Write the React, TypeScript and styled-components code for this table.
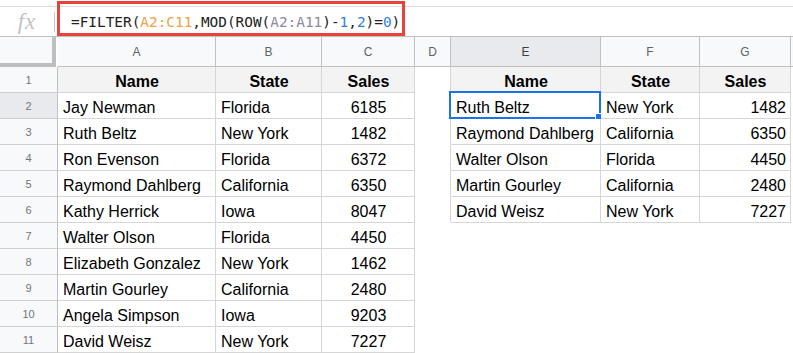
import styled, { createGlobalStyle } from 'styled-components';

const GlobalStyle = createGlobalStyle`
  html, body {
    margin: 0;
    padding: 0;
    background: #ffffff;
  }
  body {
    font-family: 'Liberation Sans', Arial, sans-serif;
  }
`;

const Page = styled.div`
  position: relative;
  width: 793px;
  height: 353px;
  overflow: hidden;
  padding-top: 6px;
  box-sizing: border-box;
  background: #fff;
`;

const FormulaBar = styled.div`
  position: relative;
  display: flex;
  align-items: center;
  height: 31px;
  box-sizing: border-box;
  border-top: 1px solid #e0e0e0;
  border-bottom: 1px solid #c0c0c0;
`;

const FxBox = styled.div`
  width: 54px;
  height: 20px;
  display: flex;
  align-items: center;
  justify-content: center;
  border-right: 1px solid #c7c7c7;
  font-family: 'Liberation Serif', 'Times New Roman', serif;
  font-style: italic;
  font-size: 23px;
  color: #c2c2c2;
  letter-spacing: 1px;
`;

const Formula = styled.div`
  padding-left: 16px;
  font-family: 'DejaVu Sans Mono', 'Liberation Mono', monospace;
  font-size: 14.4px;
  color: #222;
  white-space: nowrap;
`;

const Token = styled.span<{ $kind: 'range1' | 'range2' | 'num' }>`
  color: ${(p) =>
    p.$kind === 'range1' ? '#f1a13f' : p.$kind === 'range2' ? '#8d8a9f' : '#2e80dd'};
`;

const Highlight = styled.div`
  position: absolute;
  left: 57px;
  top: -6px;
  width: 348px;
  height: 35px;
  box-sizing: border-box;
  border: 3px solid #e8423b;
  pointer-events: none;
`;

const Sheet = styled.div`
  display: grid;
  grid-template-columns: 58px 158px 106px 93px 36px 150px 99px 91px 1fr;
`;

const Corner = styled.div`
  height: 30px;
  box-sizing: border-box;
  background: #f8f9fa;
  border-right: 4px solid #bfbfbf;
  border-bottom: 4px solid #bfbfbf;
  margin-right: 2px;
`;

const ColHead = styled.div<{ $active?: boolean }>`
  height: 30px;
  box-sizing: border-box;
  display: flex;
  align-items: center;
  justify-content: center;
  background: ${(p) => (p.$active ? '#e8eaed' : '#f8f9fa')};
  border-right: 1px solid #c0c0c0;
  border-bottom: 1px solid #c0c0c0;
  font-size: 12px;
  color: ${(p) => (p.$active ? '#3c4043' : '#5f6368')};
`;

const RowHead = styled.div<{ $active?: boolean }>`
  height: 26px;
  box-sizing: border-box;
  display: flex;
  align-items: center;
  justify-content: center;
  background: ${(p) => (p.$active ? '#e8eaed' : '#f8f9fa')};
  border-right: 1px solid #c0c0c0;
  border-bottom: 1px solid #d0d0d0;
  font-size: 11px;
  color: #70757a;
`;

type Align = 'left' | 'center' | 'right';

const Cell = styled.div<{
  $right?: boolean;
  $bottom?: boolean;
  $align?: Align;
  $header?: boolean;
  $selected?: boolean;
}>`
  position: relative;
  height: 26px;
  box-sizing: border-box;
  padding: 0 4px 1px 5px;
  display: flex;
  align-items: flex-end;
  justify-content: ${(p) =>
    p.$align === 'center' ? 'center' : p.$align === 'right' ? 'flex-end' : 'flex-start'};
  border-right: 1px solid ${(p) => (p.$right ? '#d6d6d6' : 'transparent')};
  border-bottom: 1px solid ${(p) => (p.$bottom ? '#d6d6d6' : 'transparent')};
  background: ${(p) => (p.$header ? '#f3f3f3' : '#ffffff')};
  font-size: 16px;
  line-height: 18px;
  font-weight: ${(p) => (p.$header ? 700 : 400)};
  color: #000;
  white-space: nowrap;
  overflow: ${(p) => (p.$selected ? 'visible' : 'hidden')};

  ${(p) =>
    p.$selected &&
    `
    &::before {
      content: '';
      position: absolute;
      left: -2px;
      top: -2px;
      right: -1px;
      bottom: -1px;
      border: 2px solid #1a73e8;
    }
    &::after {
      content: '';
      position: absolute;
      right: -5px;
      bottom: -5px;
      width: 8px;
      height: 8px;
      background: #1a73e8;
      border: 1px solid #fff;
    }
  `}
`;

const columns = ['A', 'B', 'C', 'D', 'E', 'F', 'G', ''];

const source: [string, string, string][] = [
  ['Name', 'State', 'Sales'],
  ['Jay Newman', 'Florida', '6185'],
  ['Ruth Beltz', 'New York', '1482'],
  ['Ron Evenson', 'Florida', '6372'],
  ['Raymond Dahlberg', 'California', '6350'],
  ['Kathy Herrick', 'Iowa', '8047'],
  ['Walter Olson', 'Florida', '4450'],
  ['Elizabeth Gonzalez', 'New York', '1462'],
  ['Martin Gourley', 'California', '2480'],
  ['Angela Simpson', 'Iowa', '9203'],
  ['David Weisz', 'New York', '7227'],
];

const filtered: [string, string, string][] = [
  ['Name', 'State', 'Sales'],
  ['Ruth Beltz', 'New York', '1482'],
  ['Raymond Dahlberg', 'California', '6350'],
  ['Walter Olson', 'Florida', '4450'],
  ['Martin Gourley', 'California', '2480'],
  ['David Weisz', 'New York', '7227'],
];

function App() {
  return (
    <>
      <GlobalStyle />
      <Page>
        <FormulaBar>
          <FxBox>fx</FxBox>
          <Formula>
            =FILTER(<Token $kind="range1">A2:C11</Token>,MOD(ROW(
            <Token $kind="range2">A2:A11</Token>)-<Token $kind="num">1</Token>,
            <Token $kind="num">2</Token>)=<Token $kind="num">0</Token>)
          </Formula>
          <Highlight />
        </FormulaBar>

        <Sheet>
          <Corner />
          {columns.map((c, i) => (
            <ColHead key={i} $active={c === 'E'}>
              {c}
            </ColHead>
          ))}

          {source.map((row, r) => {
            const right = filtered[r];
            const header = r === 0;
            return [
              <RowHead key={`h${r}`} $active={r === 1}>
                {r + 1}
              </RowHead>,
              <Cell key={`a${r}`} $right $bottom $header={header} $align={header ? 'center' : 'left'}>
                {row[0]}
              </Cell>,
              <Cell key={`b${r}`} $right $bottom $header={header} $align={header ? 'center' : 'left'}>
                {row[1]}
              </Cell>,
              <Cell key={`c${r}`} $right $bottom $header={header} $align="center">
                {row[2]}
              </Cell>,
              <Cell key={`d${r}`} $right={!!right} />,
              <Cell
                key={`e${r}`}
                $right={!!right}
                $bottom={!!right}
                $header={header}
                $selected={r === 1}
                $align={header ? 'center' : 'left'}
              >
                {right?.[0]}
              </Cell>,
              <Cell key={`f${r}`} $right={!!right} $bottom={!!right} $header={header} $align={header ? 'center' : 'left'}>
                {right?.[1]}
              </Cell>,
              <Cell key={`g${r}`} $right={!!right} $bottom={!!right} $header={header} $align={header ? 'center' : 'right'}>
                {right?.[2]}
              </Cell>,
              <Cell key={`x${r}`} />,
            ];
          })}
        </Sheet>
      </Page>
    </>
  );
}

export default App;
